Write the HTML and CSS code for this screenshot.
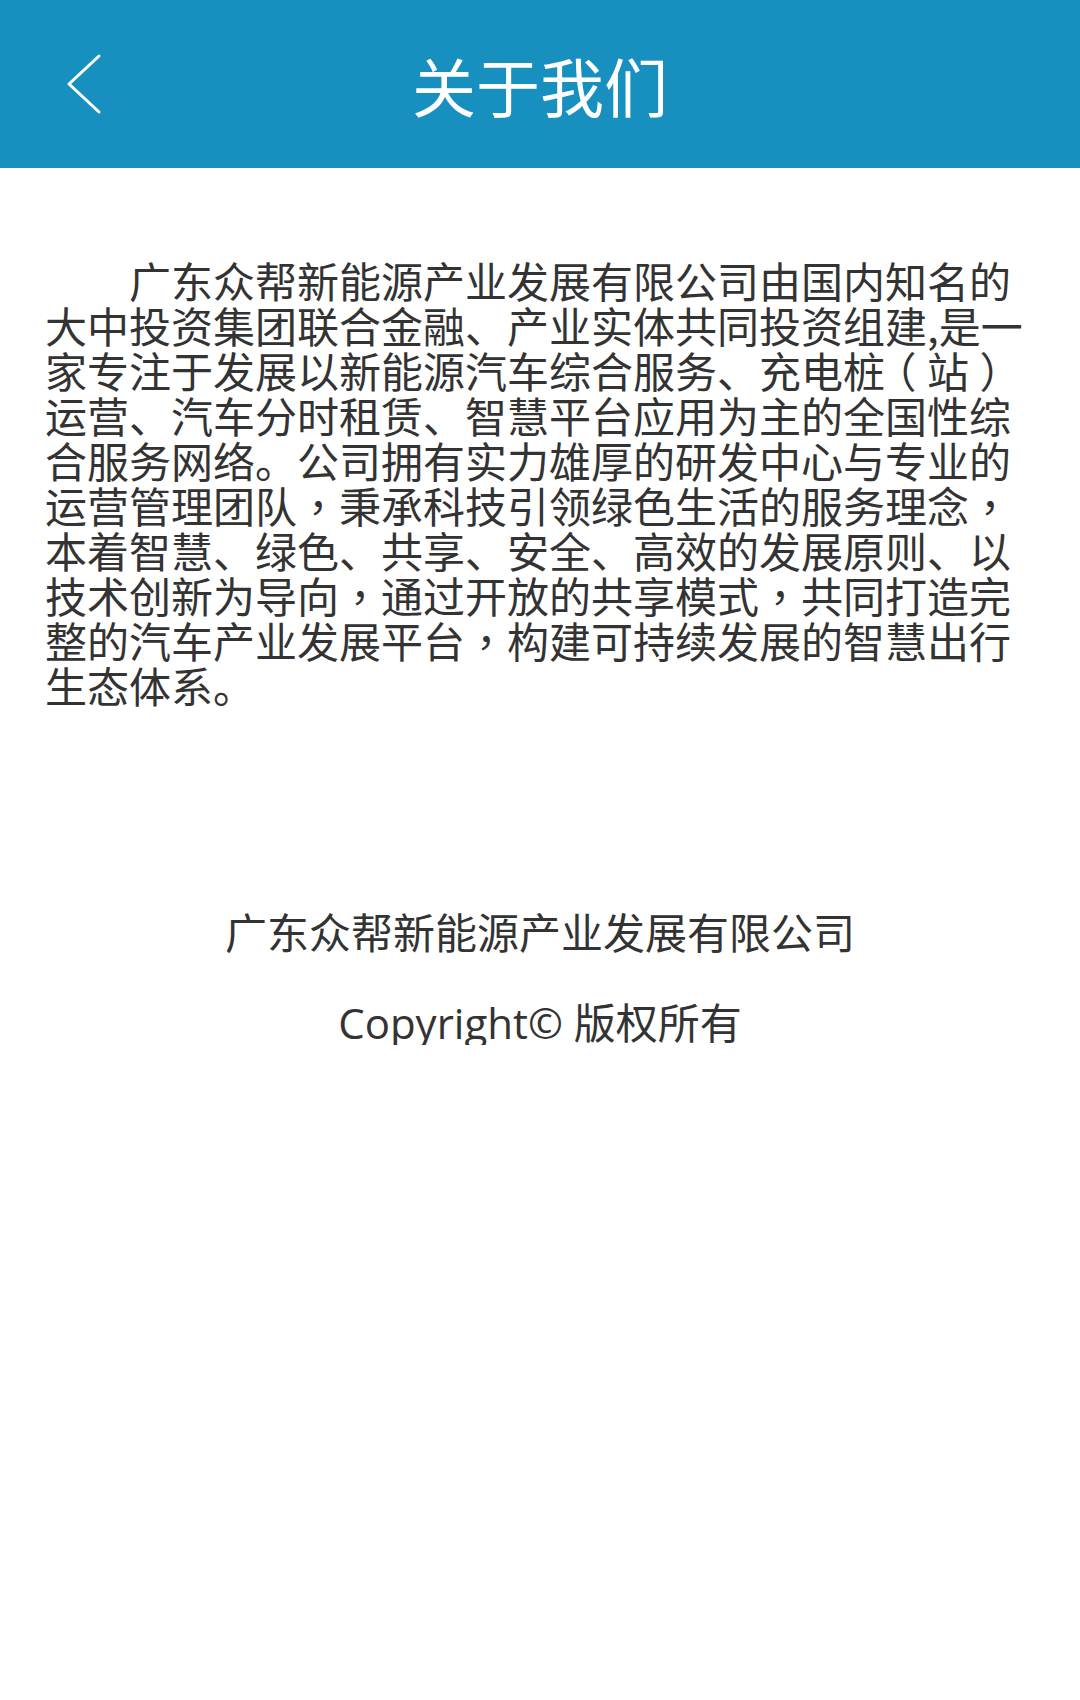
FILE: index.html
```html
<!DOCTYPE html>
<html lang="zh-CN">
<head>
<meta charset="utf-8">
<title>关于我们</title>
<link rel="stylesheet" href="styles.css">
</head>
<body>
<header class="topbar">
  <a class="back" href="#" aria-label="返回">
    <svg width="40" height="62" viewBox="0 0 40 62"><polyline points="34,3 4,31 34,59" fill="none" stroke="#ffffff" stroke-width="3" stroke-linecap="round" stroke-linejoin="round"/></svg>
  </a>
  <h1 class="title">关于我们</h1>
</header>
<main class="content">
  <p class="intro">广东众帮新能源产业发展有限公司由国内知名的大中投资集团联合金融、产业实体共同投资组建,是一家专注于发展以新能源汽车综合服务、充电桩<span class="paren">（</span>站<span class="paren">）</span>运营、汽车分时租赁、智慧平台应用为主的全国性综合服务网络。公司拥有实力雄厚的研发中心与专业的运营管理团队<span class="tc" lang="zh-TW">，</span>秉承科技引领绿色生活的服务理念<span class="tc" lang="zh-TW">，</span>本着智慧、绿色、共享、安全、高效的发展原则、以技术创新为导向<span class="tc" lang="zh-TW">，</span>通过开放的共享模式<span class="tc" lang="zh-TW">，</span>共同打造完整的汽车产业发展平台<span class="tc" lang="zh-TW">，</span>构建可持续发展的智慧出行生态体系。</p>
</main>
<footer class="footer">
  <p class="company">广东众帮新能源产业发展有限公司</p>
  <p class="copyright">Copyright© 版权所有</p>
</footer>
</body>
</html>
```
FILE: styles.css
```css
html, body {
  margin: 0;
  padding: 0;
  background: #ffffff;
}
body {
  font-family: "Noto Sans CJK SC", "Noto Sans", sans-serif;
  color: #333333;
  width: 1080px;
}
.topbar {
  position: relative;
  height: 168px;
  background: #1790c0;
  display: flex;
  align-items: center;
  justify-content: center;
}
.back {
  position: absolute;
  left: 65px;
  top: 53px;
  display: block;
  width: 40px;
  height: 62px;
}
.back svg { display: block; }
.title {
  margin: 0;
  font-size: 64px;
  font-weight: normal;
  color: #ffffff;
  line-height: 1;
}
.content {
  padding: 89px 45px 0 45px;
}
.intro {
  margin: 0;
  font-size: 42px;
  line-height: 45px;
  text-indent: 84px;
  text-align: left;
  word-break: break-all;
}
.tc {
  font-family: "Noto Sans CJK TC", "Noto Sans CJK SC", sans-serif;
}
.paren {
  font-feature-settings: "halt" 1;
  padding: 0 0.25em;
}
.footer {
  padding-top: 203px;
  text-align: center;
  font-family: "Open Sans", "Noto Sans CJK SC", sans-serif;
  font-size: 42px;
}
.footer p {
  margin: 0;
  line-height: 45px;
}
.company {
  margin-bottom: 45px !important;
}
```
